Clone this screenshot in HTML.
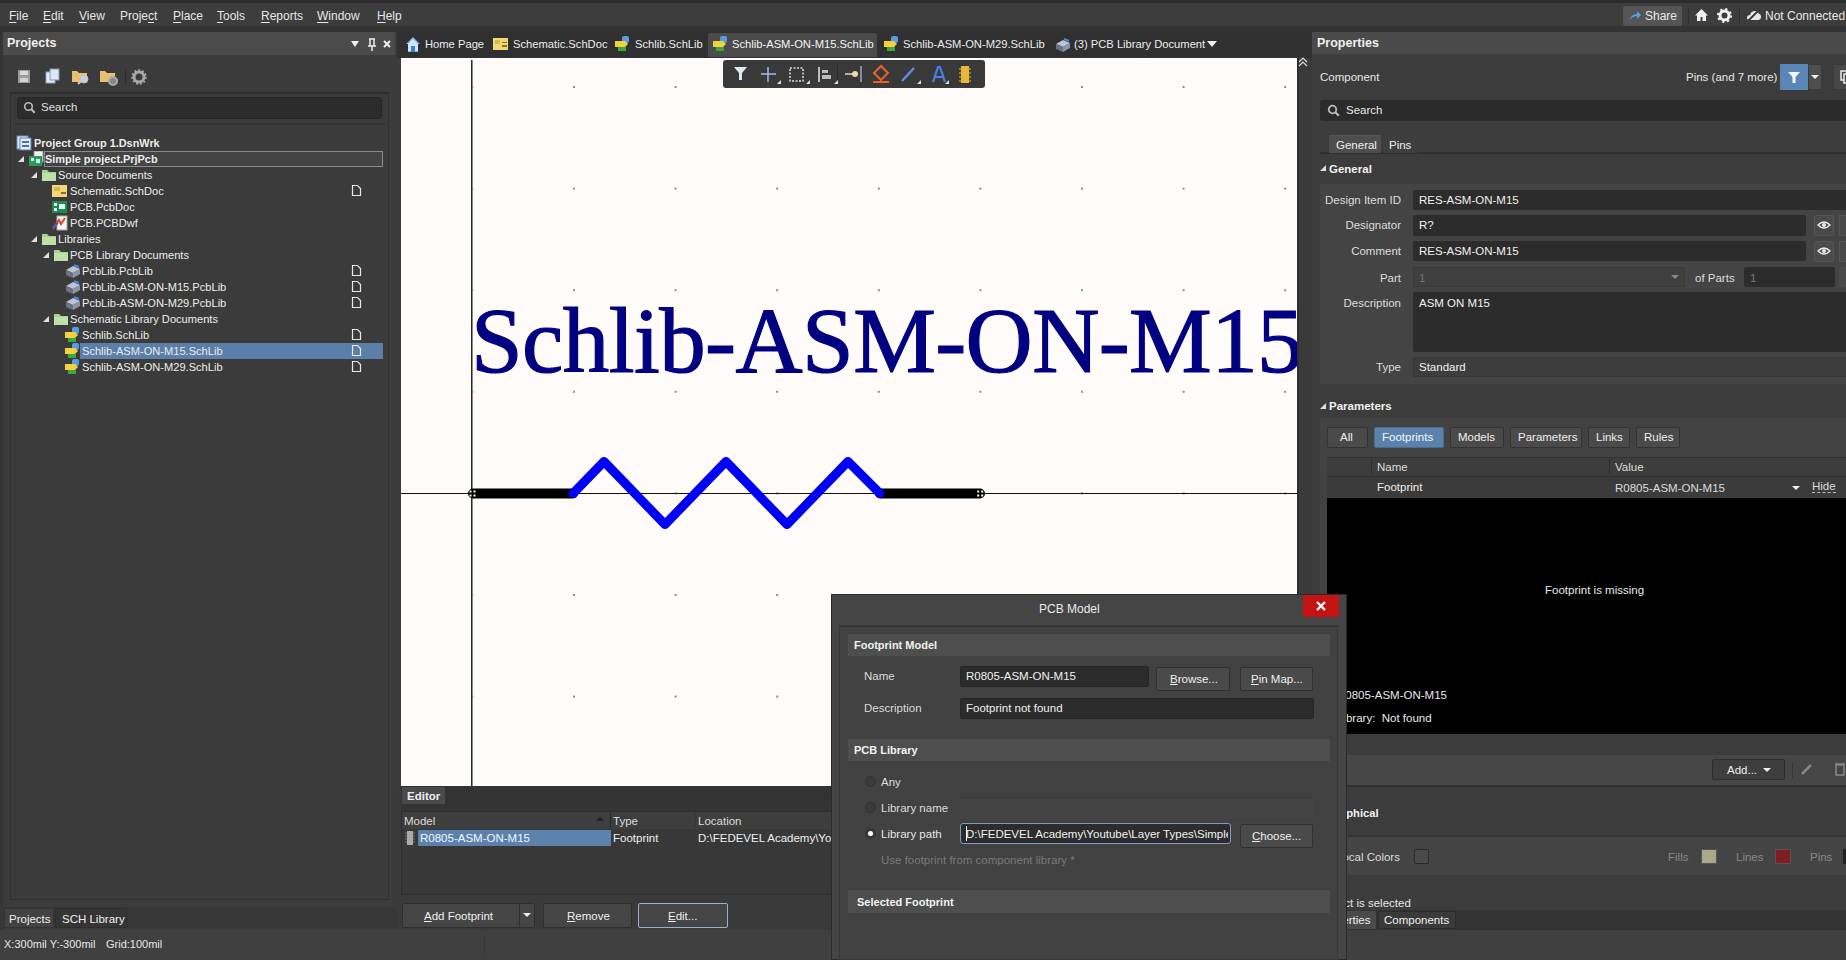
<!DOCTYPE html>
<html><head><meta charset="utf-8">
<style>
*{box-sizing:border-box}
html,body{margin:0;padding:0}
body{width:1846px;height:960px;overflow:hidden;position:relative;background:#3c3c3c;font-family:"Liberation Sans",sans-serif;font-size:12px;color:#e6e6e6}
.a{position:absolute}
.t{position:absolute;white-space:nowrap;line-height:14px}
.b{font-weight:bold}
u{text-decoration:underline;text-underline-offset:2px}
</style></head><body>

<!-- MENU BAR -->
<div class="a" style="left:0;top:0;width:1846px;height:3px;background:#2c2c2c"></div>
<div class="a" style="left:0;top:3px;width:1846px;height:23px;background:#3d3d3d"></div>
<div class="a" style="left:0;top:26px;width:1846px;height:6px;background:#333"></div>
<div id="menu">
<span class="t" style="left:9px;top:9px"><u>F</u>ile</span>
<span class="t" style="left:43px;top:9px"><u>E</u>dit</span>
<span class="t" style="left:79px;top:9px"><u>V</u>iew</span>
<span class="t" style="left:120px;top:9px">Proje<u>c</u>t</span>
<span class="t" style="left:173px;top:9px"><u>P</u>lace</span>
<span class="t" style="left:217px;top:9px"><u>T</u>ools</span>
<span class="t" style="left:261px;top:9px"><u>R</u>eports</span>
<span class="t" style="left:317px;top:9px"><u>W</u>indow</span>
<span class="t" style="left:377px;top:9px"><u>H</u>elp</span>
</div>
<div class="a" style="left:1623px;top:6px;width:59px;height:20px;background:#555;border-radius:2px"></div>
<svg class="a" style="left:1628px;top:9px" width="14" height="14"><path d="M2 11q1-6 7-6V2l4 4-4 4V7q-4 0-7 4z" fill="#5a9ae0"/></svg>
<span class="t" style="left:1645px;top:9px;font-size:12px;color:#e8e8e8">Share</span>
<div class="a" style="left:1688px;top:8px;width:1px;height:16px;background:#2e2e2e"></div>
<svg class="a" style="left:1694px;top:8px" width="15" height="14"><path d="M7.5 1L1 7.5h2V13h3.5V9h2v4H12V7.5h2z" fill="#f0f0f0"/></svg>
<svg class="a" style="left:1717px;top:8px" width="15" height="15"><circle cx="7.5" cy="7.5" r="4.5" fill="none" stroke="#f0f0f0" stroke-width="3"/><circle cx="7.5" cy="7.5" r="6.5" fill="none" stroke="#f0f0f0" stroke-width="2" stroke-dasharray="2.2 2.9"/></svg>
<div class="a" style="left:1739px;top:8px;width:1px;height:16px;background:#2e2e2e"></div>
<svg class="a" style="left:1746px;top:9px" width="15" height="13"><path d="M1 9q0-3 3-3q1-4 5-4q3 0 4 3q2 0 2 3t-3 3H3q-2 0-2-2z" fill="#e8e8e8"/><path d="M2 12L13 1" stroke="#3d3d3d" stroke-width="2"/></svg>
<span class="t" style="left:1765px;top:9px;font-size:12px;color:#e8e8e8">Not Connected</span>

<!-- LEFT PANEL -->
<div class="a" style="left:0;top:32px;width:397px;height:898px;background:#3b3b3b"></div>
<div class="a" style="left:0;top:32px;width:3px;height:898px;background:#353535"></div>
<div class="a" style="left:3px;top:32px;width:392px;height:23px;background:#4b4b4b"></div>
<span class="t b" style="left:7px;top:36px;font-size:12.5px;color:#f0f0f0">Projects</span>
<svg class="a" style="left:350px;top:38px" width="45" height="14"><path d="M1 3h8L5 9z" fill="#eee"/><path d="M19 1h6M20 1v7h4V1M18 8h8M22 8v5" stroke="#eee" stroke-width="1.5" fill="none"/><path d="M34 3l6 6M40 3l-6 6" stroke="#eee" stroke-width="2"/></svg>
<svg class="a" style="left:16px;top:68px" width="140" height="18"><rect x="2" y="2" width="12" height="13" fill="#9a9a9a"/><rect x="4" y="3" width="8" height="4" fill="#d8d8d8"/><rect x="4" y="10" width="8" height="4" fill="#d0d0d0"/><rect x="30" y="4" width="9" height="11" fill="#e8eef6" stroke="#8aa0c0"/><rect x="34" y="1" width="9" height="11" fill="#dfe6f0" stroke="#7a9ac8"/><path d="M56 3h5l2 2h8v9H56z" fill="#e8c070"/><circle cx="68" cy="11" r="4" fill="#ccd" stroke="#bbb"/><path d="M62 16l3-3" stroke="#ccc" stroke-width="2"/><path d="M84 3h5l2 2h8v9H84z" fill="#e8c070"/><circle cx="97" cy="13" r="4" fill="#888" stroke="#aaa" stroke-width="2"/><rect x="109" y="2" width="1" height="15" fill="#2c2c2c"/><circle cx="123" cy="9" r="5" fill="none" stroke="#a8a8a8" stroke-width="3"/><circle cx="123" cy="9" r="7" fill="none" stroke="#a8a8a8" stroke-width="1.5" stroke-dasharray="2 2"/></svg>
<div class="a" style="left:10px;top:92px;width:379px;height:808px;border:1px solid #2f2f2f;border-top:2px solid #2d2d2d"></div>
<div class="a" style="left:17px;top:97px;width:365px;height:22px;background:#2c2c2c;border-radius:3px;border:1px solid #262626"></div>
<svg class="a" style="left:23px;top:101px" width="14" height="14"><circle cx="5.5" cy="5.5" r="3.8" fill="none" stroke="#bbb" stroke-width="1.6"/><path d="M8.3 8.3l3.5 3.5" stroke="#bbb" stroke-width="2"/></svg>
<span class="t" style="left:41px;top:100px;font-size:11.5px;color:#e0e0e0">Search</span>
<div class="a" style="left:15px;top:123px;width:370px;height:2px;background:#303030"></div>
<div class="a" style="left:44px;top:151px;width:339px;height:16px;border:1px solid #8a8a8a;background:#444"></div>
<div class="a" style="left:80px;top:343px;width:303px;height:16px;background:#5b7fa8"></div>
<svg class="a" style="left:16px;top:135px" width="16" height="16"><rect x="1" y="1" width="11" height="13" fill="#dfe8f5" stroke="#6d8fc4"/><rect x="4" y="3" width="11" height="12" fill="#e8eef8" stroke="#5a7fbf"/><rect x="6" y="6" width="7" height="2" fill="#4a6fb0"/><rect x="6" y="10" width="7" height="2" fill="#4a6fb0"/></svg>
<span class="t b" style="left:34px;top:136px;font-size:10.9px;color:#ececec">Project Group 1.DsnWrk</span>
<svg class="a" style="left:18px;top:156px" width="7" height="7"><path d="M6 0V6H0z" fill="#e0e0e0"/></svg>
<svg class="a" style="left:28px;top:151px" width="16" height="16"><rect x="6" y="0" width="9" height="11" fill="#f2f2f2" stroke="#999"/><rect x="1" y="5" width="13" height="10" fill="#2e9a5a"/><rect x="3" y="7" width="3" height="3" fill="#cfe"/><rect x="8" y="8" width="4" height="4" fill="#cfe"/></svg>
<span class="t b" style="left:45px;top:152px;font-size:10.9px;color:#ececec">Simple project.PrjPcb</span>
<svg class="a" style="left:31px;top:172px" width="7" height="7"><path d="M6 0V6H0z" fill="#e0e0e0"/></svg>
<svg class="a" style="left:41px;top:167px" width="16" height="16"><path d="M1 3h5l2 2h7v9H1z" fill="#a9d18e"/><rect x="1" y="6" width="14" height="8" fill="#bfe0a6"/></svg>
<span class="t" style="left:58px;top:168px;font-size:11.1px;color:#ececec">Source Documents</span>
<svg class="a" style="left:52px;top:183px" width="16" height="16"><rect x="0" y="2" width="15" height="12" fill="#f0d878"/><rect x="2" y="4" width="6" height="4" fill="#d8b848"/><rect x="9" y="9" width="5" height="2" fill="#907020"/></svg>
<span class="t" style="left:70px;top:184px;font-size:11.1px;color:#ececec">Schematic.SchDoc</span>
<svg class="a" style="left:351px;top:184px" width="11" height="13"><path d="M1.5 1.5h5l3 3v7h-8z" fill="none" stroke="#e8e8e8" stroke-width="1.2"/></svg>
<svg class="a" style="left:52px;top:199px" width="16" height="16"><rect x="0" y="2" width="15" height="12" fill="#1f8a4c"/><rect x="2" y="4" width="3" height="3" fill="#dff"/><rect x="7" y="5" width="6" height="5" fill="#dff"/><rect x="2" y="9" width="3" height="3" fill="#dff"/></svg>
<span class="t" style="left:70px;top:200px;font-size:11.1px;color:#ececec">PCB.PcbDoc</span>
<svg class="a" style="left:52px;top:215px" width="16" height="16"><rect x="5" y="1" width="10" height="14" fill="#f4f4f4" stroke="#aaa"/><path d="M1 14L7 5l2 4 4-6" stroke="#d42" stroke-width="2" fill="none"/><path d="M1 12l5-4" stroke="#36c" stroke-width="2"/></svg>
<span class="t" style="left:70px;top:216px;font-size:11.1px;color:#ececec">PCB.PCBDwf</span>
<svg class="a" style="left:31px;top:236px" width="7" height="7"><path d="M6 0V6H0z" fill="#e0e0e0"/></svg>
<svg class="a" style="left:41px;top:231px" width="16" height="16"><path d="M1 3h5l2 2h7v9H1z" fill="#a9d18e"/><rect x="1" y="6" width="14" height="8" fill="#bfe0a6"/></svg>
<span class="t" style="left:58px;top:232px;font-size:11.1px;color:#ececec">Libraries</span>
<svg class="a" style="left:43px;top:252px" width="7" height="7"><path d="M6 0V6H0z" fill="#e0e0e0"/></svg>
<svg class="a" style="left:53px;top:247px" width="16" height="16"><path d="M1 3h5l2 2h7v9H1z" fill="#a9d18e"/><rect x="1" y="6" width="14" height="8" fill="#bfe0a6"/></svg>
<span class="t" style="left:70px;top:248px;font-size:11.1px;color:#ececec">PCB Library Documents</span>
<svg class="a" style="left:65px;top:263px" width="16" height="16"><path d="M1 7l7-4 7 3-7 4z" fill="#b8c4d4"/><path d="M1 7v5l7 3v-5z" fill="#6a7484"/><path d="M8 10v5l7-4V6z" fill="#8a96a8"/><path d="M9 2l5 2" stroke="#4a8ad8" stroke-width="2"/></svg>
<span class="t" style="left:82px;top:264px;font-size:11.1px;color:#ececec">PcbLib.PcbLib</span>
<svg class="a" style="left:351px;top:264px" width="11" height="13"><path d="M1.5 1.5h5l3 3v7h-8z" fill="none" stroke="#e8e8e8" stroke-width="1.2"/></svg>
<svg class="a" style="left:65px;top:279px" width="16" height="16"><path d="M1 7l7-4 7 3-7 4z" fill="#b8c4d4"/><path d="M1 7v5l7 3v-5z" fill="#6a7484"/><path d="M8 10v5l7-4V6z" fill="#8a96a8"/><path d="M9 2l5 2" stroke="#4a8ad8" stroke-width="2"/></svg>
<span class="t" style="left:82px;top:280px;font-size:11.1px;color:#ececec">PcbLib-ASM-ON-M15.PcbLib</span>
<svg class="a" style="left:351px;top:280px" width="11" height="13"><path d="M1.5 1.5h5l3 3v7h-8z" fill="none" stroke="#e8e8e8" stroke-width="1.2"/></svg>
<svg class="a" style="left:65px;top:295px" width="16" height="16"><path d="M1 7l7-4 7 3-7 4z" fill="#b8c4d4"/><path d="M1 7v5l7 3v-5z" fill="#6a7484"/><path d="M8 10v5l7-4V6z" fill="#8a96a8"/><path d="M9 2l5 2" stroke="#4a8ad8" stroke-width="2"/></svg>
<span class="t" style="left:82px;top:296px;font-size:11.1px;color:#ececec">PcbLib-ASM-ON-M29.PcbLib</span>
<svg class="a" style="left:351px;top:296px" width="11" height="13"><path d="M1.5 1.5h5l3 3v7h-8z" fill="none" stroke="#e8e8e8" stroke-width="1.2"/></svg>
<svg class="a" style="left:43px;top:316px" width="7" height="7"><path d="M6 0V6H0z" fill="#e0e0e0"/></svg>
<svg class="a" style="left:53px;top:311px" width="16" height="16"><path d="M1 3h5l2 2h7v9H1z" fill="#a9d18e"/><rect x="1" y="6" width="14" height="8" fill="#bfe0a6"/></svg>
<span class="t" style="left:70px;top:312px;font-size:11.1px;color:#ececec">Schematic Library Documents</span>
<svg class="a" style="left:65px;top:327px" width="16" height="16"><rect x="7" y="0" width="7" height="7" rx="2" fill="#5a9ae0"/><path d="M0 5h10l3 3-3 3H0z" fill="#f2d23a"/><rect x="3" y="11" width="8" height="4" fill="#3aa83a"/></svg>
<span class="t" style="left:82px;top:328px;font-size:11.1px;color:#ececec">Schlib.SchLib</span>
<svg class="a" style="left:351px;top:328px" width="11" height="13"><path d="M1.5 1.5h5l3 3v7h-8z" fill="none" stroke="#e8e8e8" stroke-width="1.2"/></svg>
<svg class="a" style="left:65px;top:343px" width="16" height="16"><rect x="7" y="0" width="7" height="7" rx="2" fill="#5a9ae0"/><path d="M0 5h10l3 3-3 3H0z" fill="#f2d23a"/><rect x="3" y="11" width="8" height="4" fill="#3aa83a"/></svg>
<span class="t" style="left:82px;top:344px;font-size:11.1px;color:#ececec">Schlib-ASM-ON-M15.SchLib</span>
<svg class="a" style="left:351px;top:344px" width="11" height="13"><path d="M1.5 1.5h5l3 3v7h-8z" fill="none" stroke="#e8e8e8" stroke-width="1.2"/></svg>
<svg class="a" style="left:65px;top:359px" width="16" height="16"><rect x="7" y="0" width="7" height="7" rx="2" fill="#5a9ae0"/><path d="M0 5h10l3 3-3 3H0z" fill="#f2d23a"/><rect x="3" y="11" width="8" height="4" fill="#3aa83a"/></svg>
<span class="t" style="left:82px;top:360px;font-size:11.1px;color:#ececec">Schlib-ASM-ON-M29.SchLib</span>
<svg class="a" style="left:351px;top:360px" width="11" height="13"><path d="M1.5 1.5h5l3 3v7h-8z" fill="none" stroke="#e8e8e8" stroke-width="1.2"/></svg>

<!-- bottom tabs -->
<div class="a" style="left:0;top:907px;width:397px;height:21px;background:#373737"></div>
<div class="a" style="left:4px;top:908px;width:50px;height:20px;background:#424242;border:1px solid #333"></div>
<span class="t" style="left:9px;top:912px;font-size:11.5px;color:#eee">Projects</span>
<div class="a" style="left:55px;top:908px;width:72px;height:20px;background:#353535;border:1px solid #2e2e2e"></div>
<span class="t" style="left:62px;top:912px;font-size:11.5px;color:#eee">SCH Library</span>
<!-- STATUS BAR -->
<div class="a" style="left:0;top:930px;width:1846px;height:30px;background:#404040"></div>
<span class="t" style="left:4px;top:937px;font-size:11px">X:300mil Y:-300mil</span>
<span class="t" style="left:106px;top:937px;font-size:11px">Grid:100mil</span>

<!-- TAB BAR -->
<div class="a" style="left:397px;top:32px;width:915px;height:26px;background:#303030"></div>
<div class="a" style="left:708px;top:33px;width:169px;height:24px;background:#4b4b4b;border-radius:2px 2px 0 0"></div>
<svg class="a" style="left:405px;top:36px" width="16" height="17"><path d="M8 1L1 8h2v8h4v-5h2v5h4V8h2z" fill="#7fb7ee"/><path d="M8 3L3 8v7h3v-5h4v5h3V8z" fill="#cfe6fb"/><rect x="6" y="10" width="4" height="6" fill="#3d7fc8"/></svg>
<span class="t" style="left:425px;top:37px;font-size:11.2px;color:#ececec">Home Page</span>
<svg class="a" style="left:493px;top:37px" width="16" height="14"><rect x="0" y="1" width="15" height="12" fill="#f0d878"/><rect x="2" y="3" width="5" height="4" fill="#d8b848"/><rect x="9" y="8" width="5" height="2" fill="#907020"/><rect x="9" y="5" width="5" height="1" fill="#907020"/></svg>
<span class="t" style="left:513px;top:37px;font-size:11.2px;color:#ececec">Schematic.SchDoc</span>
<svg class="a" style="left:615px;top:36px" width="16" height="16"><rect x="7" y="0" width="7" height="7" rx="2" fill="#5a9ae0"/><path d="M0 5h10l3 3-3 3H0z" fill="#f2d23a"/><rect x="3" y="11" width="8" height="4" fill="#3aa83a"/></svg>
<span class="t" style="left:635px;top:37px;font-size:11.2px;color:#ececec">Schlib.SchLib</span>
<svg class="a" style="left:713px;top:36px" width="16" height="16"><rect x="7" y="0" width="7" height="7" rx="2" fill="#5a9ae0"/><path d="M0 5h10l3 3-3 3H0z" fill="#f2d23a"/><rect x="3" y="11" width="8" height="4" fill="#3aa83a"/></svg>
<span class="t" style="left:732px;top:37px;font-size:11.2px;color:#f4f4f4">Schlib-ASM-ON-M15.SchLib</span>
<svg class="a" style="left:884px;top:36px" width="16" height="16"><rect x="7" y="0" width="7" height="7" rx="2" fill="#5a9ae0"/><path d="M0 5h10l3 3-3 3H0z" fill="#f2d23a"/><rect x="3" y="11" width="8" height="4" fill="#3aa83a"/></svg>
<span class="t" style="left:903px;top:37px;font-size:11.2px;color:#ececec">Schlib-ASM-ON-M29.SchLib</span>
<svg class="a" style="left:1055px;top:37px" width="16" height="16"><path d="M1 7l7-4 7 3-7 4z" fill="#b8c4d4"/><path d="M1 7v5l7 3v-5z" fill="#6a7484"/><path d="M8 10v5l7-4V6z" fill="#8a96a8"/><path d="M9 2l5 2" stroke="#4a8ad8" stroke-width="2"/></svg>
<span class="t" style="left:1074px;top:37px;font-size:11.2px;color:#ececec">(3) PCB Library Document</span>
<svg class="a" style="left:1206px;top:40px" width="12" height="8"><path d="M1 1h10L6 7z" fill="#eee"/></svg>
<!-- CANVAS -->
<div class="a" style="left:401px;top:58px;width:896px;height:728px;background:#fefbf8;overflow:hidden">
<svg width="896" height="728" style="position:absolute;left:0;top:0">
<defs><pattern id="gd" x="172" y="28" width="101.6" height="101.6" patternUnits="userSpaceOnUse"><rect x="-1" y="0" width="3" height="2" fill="#8c8c8c"/></pattern></defs>
<rect x="0" y="0" width="896" height="728" fill="url(#gd)"/>
<rect x="70" y="0" width="1" height="728" fill="#2a2a2a"/><rect x="71" y="0" width="1" height="728" fill="#8a8a8a"/>
<rect x="0" y="435" width="896" height="1" fill="#111"/><rect x="0" y="0" width="896" height="2" fill="#ffffff"/>
<text x="70" y="314" style="font-family:'Liberation Serif';font-size:93px;letter-spacing:-0.6px" fill="#000080" stroke="#000080" stroke-width="1.2">Schlib-ASM-ON-M15</text>
<line x1="72" y1="435.5" x2="172" y2="435.5" stroke="#000" stroke-width="10" stroke-linecap="round"/>
<line x1="479" y1="435.5" x2="579" y2="435.5" stroke="#000" stroke-width="10" stroke-linecap="round"/>
<polyline points="172,435.5 203,403.5 264,466.5 325,403.5 386,466.5 447,403.5 479,435.5" fill="none" stroke="#0000f5" stroke-width="9" stroke-linejoin="round" stroke-linecap="round"/>
<path d="M68.5 432.5h2v2h-2zM72.5 432.5h2v2h-2zM68.5 436.5h2v2h-2zM72.5 436.5h2v2h-2z M576.2 432.5h2v2h-2zM580.2 432.5h2v2h-2zM576.2 436.5h2v2h-2zM580.2 436.5h2v2h-2z" fill="#fff"/>
</svg>
</div>
<!-- canvas toolbar -->
<div class="a" style="left:723px;top:60px;width:262px;height:28px;background:#393939;border-radius:3px"></div>
<svg class="a" style="left:723px;top:60px" width="262" height="28">
<path d="M11 7h13l-5 6v7h-3v-7z" fill="#dce8f4"/>
<path d="M45 7v15M38 14h15" stroke="#a8b8e8" stroke-width="1.5"/>
<rect x="67" y="8" width="13" height="13" fill="none" stroke="#ddd" stroke-width="1.5" stroke-dasharray="2 1.5"/>
<path d="M96 7v15" stroke="#bbb" stroke-width="2"/><rect x="99" y="10" width="6" height="3" fill="#bbb"/><rect x="99" y="15" width="9" height="4" fill="#bbb"/>
<rect x="114" y="5" width="1" height="19" fill="#2a2a2a"/>
<path d="M122 14h8" stroke="#ddd" stroke-width="1.5"/><circle cx="132" cy="14" r="3" fill="#f0d8a8"/><path d="M138 6v16" stroke="#9aa8d8" stroke-width="1.5"/>
<path d="M158 6l7 7-7 7-7-7z" fill="none" stroke="#e8602a" stroke-width="2"/><rect x="150" y="21" width="16" height="2" fill="#e8602a"/>
<path d="M179 21l12-13" stroke="#5a8ee8" stroke-width="2.5"/>
<path d="M210 22l5-15h2l5 15M212 17h8" fill="none" stroke="#4a7ee8" stroke-width="2.2"/>
<rect x="238" y="6" width="8" height="17" fill="#e8b838"/><path d="M236 9h2M236 13h2M236 17h2M236 21h2M246 9h2M246 13h2M246 17h2M246 21h2" stroke="#e8b838"/>
<path d="M54 24h4v-4z M83 24h4v-4z M111 24h4v-4z M194 24h4v-4z M222 24h4v-4z" fill="#ddd"/>
</svg>

<!-- EDITOR PANEL -->
<div class="a" style="left:397px;top:786px;width:915px;height:144px;background:#3a3a3a"></div>
<div class="a" style="left:401px;top:786px;width:911px;height:18px;background:#333"></div>
<div class="a" style="left:402px;top:787px;width:43px;height:17px;background:#4a4a4a"></div>
<span class="t b" style="left:407px;top:789px;font-size:11.5px;color:#f0f0f0">Editor</span>
<div class="a" style="left:401px;top:804px;width:911px;height:7px;background:#343434"></div>
<div class="a" style="left:401px;top:811px;width:911px;height:84px;background:#383838;border:1px solid #2e2e2e"></div>
<div class="a" style="left:402px;top:812px;width:909px;height:17px;background:#3e3e3e"></div>
<span class="t" style="left:404px;top:814px;font-size:11.5px;color:#dcdcdc">Model</span>
<svg class="a" style="left:596px;top:817px" width="8" height="5"><path d="M0 4h8L4 0z" fill="#222"/></svg>
<div class="a" style="left:610px;top:813px;width:1px;height:15px;background:#2a2a2a"></div>
<span class="t" style="left:613px;top:814px;font-size:11.5px;color:#dcdcdc">Type</span>
<div class="a" style="left:695px;top:813px;width:1px;height:15px;background:#2a3a4a"></div>
<span class="t" style="left:698px;top:814px;font-size:11.5px;color:#dcdcdc">Location</span>
<svg class="a" style="left:404px;top:830px" width="12" height="16"><rect x="3" y="1" width="6" height="14" fill="#aaa"/><path d="M1 3h2M1 6h2M1 9h2M1 12h2M9 3h2M9 6h2M9 9h2M9 12h2" stroke="#777"/></svg>
<div class="a" style="left:418px;top:830px;width:193px;height:16px;background:#5b82ad"></div>
<span class="t" style="left:420px;top:831px;font-size:11.5px;color:#f4f8fc">R0805-ASM-ON-M15</span>
<span class="t" style="left:613px;top:831px;font-size:11.5px;color:#eee">Footprint</span>
<span class="t" style="left:698px;top:831px;font-size:11.5px;color:#eee">D:\FEDEVEL Academy\Youtube</span>
<div class="a" style="left:402px;top:903px;width:133px;height:25px;background:#454545;border:1px solid #2e2e2e;border-radius:2px"></div>
<div class="a" style="left:519px;top:904px;width:1px;height:23px;background:#2e2e2e"></div>
<span class="t" style="left:424px;top:909px;font-size:11.5px;color:#eee"><span style="text-decoration:underline">A</span>dd Footprint</span>
<svg class="a" style="left:522px;top:912px" width="10" height="6"><path d="M1 1h8L5 5z" fill="#eee"/></svg>
<div class="a" style="left:543px;top:903px;width:89px;height:25px;background:#454545;border:1px solid #2e2e2e;border-radius:2px"></div>
<span class="t" style="left:567px;top:909px;font-size:11.5px;color:#eee"><span style="text-decoration:underline">R</span>emove</span>
<div class="a" style="left:638px;top:903px;width:90px;height:25px;background:#454545;border:1px solid #9ab0c8;border-radius:2px"></div>
<span class="t" style="left:668px;top:909px;font-size:11.5px;color:#eee"><span style="text-decoration:underline">E</span>dit...</span>
<div class="a" style="left:484px;top:935px;width:1px;height:20px;background:#383838"></div>
<!-- PROPERTIES -->
<div class="a" style="left:1297px;top:58px;width:15px;height:728px;background:#3a3a3a;border-left:2px solid #2e2e2e"></div>
<svg class="a" style="left:1298px;top:57px" width="10" height="10"><path d="M1 5l4-4 4 4M1 9l4-4 4 4" fill="none" stroke="#ddd" stroke-width="1.2"/></svg>
<div class="a" style="left:1312px;top:32px;width:534px;height:898px;background:#3c3c3c"></div>
<div class="a" style="left:1312px;top:32px;width:534px;height:21px;background:#4a4a4a"></div>
<div class="a" style="left:1312px;top:53px;width:534px;height:2px;background:#444"></div>
<span class="t b" style="left:1317px;top:36px;font-size:12.5px;color:#f0f0f0">Properties</span>
<span class="t" style="left:1320px;top:70px;font-size:11.5px;color:#e6e6e6">Component</span>
<span class="t" style="left:1686px;top:70px;font-size:11.5px;color:#e6e6e6">Pins (and 7 more)</span>
<div class="a" style="left:1780px;top:64px;width:28px;height:26px;background:#5a85b5"></div>
<svg class="a" style="left:1786px;top:70px" width="16" height="15"><path d="M2 2h12l-4.5 5v6h-3V7z" fill="#f4f8fc"/></svg>
<div class="a" style="left:1808px;top:64px;width:14px;height:26px;background:#4e4e4e;border:1px solid #3a3a3a"></div>
<svg class="a" style="left:1810px;top:74px" width="10" height="6"><path d="M1 1h8L5 5z" fill="#eee"/></svg>
<div class="a" style="left:1833px;top:64px;width:20px;height:26px;background:#474747;border:1px solid #3a3a3a"></div>
<svg class="a" style="left:1840px;top:70px" width="8" height="14"><rect x="1" y="1" width="8" height="9" fill="none" stroke="#eee" stroke-width="1.5"/><rect x="4" y="4" width="8" height="9" fill="#474747" stroke="#eee" stroke-width="1.5"/></svg>
<div class="a" style="left:1320px;top:100px;width:540px;height:21px;background:#2b2b2b;border-radius:3px"></div>
<svg class="a" style="left:1327px;top:104px" width="14" height="14"><circle cx="5.5" cy="5.5" r="3.8" fill="none" stroke="#bbb" stroke-width="1.8"/><path d="M8.3 8.3l3.5 3.5" stroke="#bbb" stroke-width="2.2"/></svg>
<span class="t" style="left:1346px;top:103px;font-size:11.5px;color:#e6e6e6">Search</span>
<div class="a" style="left:1320px;top:152px;width:526px;height:2px;background:#2f2f2f"></div>
<div class="a" style="left:1329px;top:135px;width:52px;height:18px;background:#4e4e4e;border-top:1px solid #555"></div>
<span class="t" style="left:1336px;top:138px;font-size:11.5px;color:#eee">General</span>
<div class="a" style="left:1383px;top:135px;width:34px;height:18px;background:#3e3e3e"></div>
<span class="t" style="left:1389px;top:138px;font-size:11.5px;color:#eee">Pins</span>
<svg class="a" style="left:1320px;top:165px" width="7" height="7"><path d="M6 0V6H0z" fill="#ddd"/></svg>
<span class="t b" style="left:1329px;top:162px;font-size:11.5px;color:#f0f0f0">General</span>
<div class="a" style="left:1320px;top:184px;width:526px;height:200px;background:#444"></div>
<div class="a" style="left:1413px;top:190px;width:440px;height:20px;background:#2c2c2c;border-radius:2px"></div>
<div class="a" style="left:1413px;top:215px;width:393px;height:21px;background:#2c2c2c;border-radius:2px"></div>
<div class="a" style="left:1413px;top:241px;width:393px;height:20px;background:#2c2c2c;border-radius:2px"></div>
<span class="t" style="right:445px;top:193px;font-size:11.5px;color:#dcdcdc">Design Item ID</span>
<span class="t" style="left:1419px;top:193px;font-size:11.5px;color:#f0f0f0">RES-ASM-ON-M15</span>
<span class="t" style="right:445px;top:218px;font-size:11.5px;color:#dcdcdc">Designator</span>
<span class="t" style="left:1419px;top:218px;font-size:11.5px;color:#f0f0f0">R?</span>
<span class="t" style="right:445px;top:244px;font-size:11.5px;color:#dcdcdc">Comment</span>
<span class="t" style="left:1419px;top:244px;font-size:11.5px;color:#f0f0f0">RES-ASM-ON-M15</span>
<div class="a" style="left:1814px;top:215px;width:20px;height:21px;background:#4a4a4a;border:1px solid #555;border-radius:2px"></div>
<svg class="a" style="left:1817px;top:219px" width="14" height="12"><path d="M1 6q6-6 12 0q-6 6-12 0z" fill="none" stroke="#eee" stroke-width="1.4"/><circle cx="7" cy="6" r="2" fill="#eee"/></svg>
<div class="a" style="left:1839px;top:215px;width:10px;height:21px;background:#4a4a4a;border:1px solid #555"></div>
<div class="a" style="left:1814px;top:241px;width:20px;height:21px;background:#4a4a4a;border:1px solid #555;border-radius:2px"></div>
<svg class="a" style="left:1817px;top:245px" width="14" height="12"><path d="M1 6q6-6 12 0q-6 6-12 0z" fill="none" stroke="#eee" stroke-width="1.4"/><circle cx="7" cy="6" r="2" fill="#eee"/></svg>
<div class="a" style="left:1839px;top:241px;width:10px;height:21px;background:#4a4a4a;border:1px solid #555"></div>
<span class="t" style="right:445px;top:271px;font-size:11.5px;color:#dcdcdc">Part</span>
<div class="a" style="left:1413px;top:267px;width:272px;height:20px;background:#3f3f3f;border:1px solid #393939"></div>
<span class="t" style="left:1419px;top:271px;font-size:11.5px;color:#777">1</span>
<svg class="a" style="left:1670px;top:274px" width="10" height="6"><path d="M1 1h8L5 5z" fill="#888"/></svg>
<span class="t" style="left:1695px;top:271px;font-size:11.5px;color:#dcdcdc">of Parts</span>
<div class="a" style="left:1744px;top:267px;width:91px;height:20px;background:#2c2c2c;border-radius:2px"></div>
<span class="t" style="left:1750px;top:271px;font-size:11.5px;color:#777">1</span>
<div class="a" style="left:1839px;top:267px;width:10px;height:20px;background:#4a4a4a"></div>
<span class="t" style="right:445px;top:296px;font-size:11.5px;color:#dcdcdc">Description</span>
<div class="a" style="left:1413px;top:292px;width:440px;height:60px;background:#2c2c2c;border-radius:2px"></div>
<span class="t" style="left:1419px;top:296px;font-size:11.5px;color:#f0f0f0">ASM ON M15</span>
<span class="t" style="right:445px;top:360px;font-size:11.5px;color:#dcdcdc">Type</span>
<div class="a" style="left:1413px;top:357px;width:440px;height:20px;background:#3d3d3d;border:1px solid #363636;border-radius:2px"></div>
<span class="t" style="left:1419px;top:360px;font-size:11.5px;color:#f0f0f0">Standard</span>

<svg class="a" style="left:1320px;top:403px" width="7" height="7"><path d="M6 0V6H0z" fill="#ddd"/></svg>
<span class="t b" style="left:1329px;top:399px;font-size:11.5px;color:#f0f0f0">Parameters</span>
<div class="a" style="left:1320px;top:418px;width:526px;height:340px;background:#424242"></div>
<div class="a" style="left:1327px;top:427px;width:41px;height:21px;background:#4a4a4a;border:1px solid #333;border-radius:2px"></div>
<span class="t" style="left:1340px;top:430px;font-size:11.5px;color:#eee">All</span>
<div class="a" style="left:1374px;top:427px;width:70px;height:21px;background:#5b82ad;border:1px solid #4a6a90;border-radius:2px"></div>
<span class="t" style="left:1382px;top:430px;font-size:11.5px;color:#f4f8fc">Footprints</span>
<div class="a" style="left:1450px;top:427px;width:54px;height:21px;background:#4a4a4a;border:1px solid #333;border-radius:2px"></div>
<span class="t" style="left:1458px;top:430px;font-size:11.5px;color:#eee">Models</span>
<div class="a" style="left:1510px;top:427px;width:72px;height:21px;background:#4a4a4a;border:1px solid #333;border-radius:2px"></div>
<span class="t" style="left:1518px;top:430px;font-size:11.5px;color:#eee">Parameters</span>
<div class="a" style="left:1588px;top:427px;width:42px;height:21px;background:#4a4a4a;border:1px solid #333;border-radius:2px"></div>
<span class="t" style="left:1596px;top:430px;font-size:11.5px;color:#eee">Links</span>
<div class="a" style="left:1636px;top:427px;width:44px;height:21px;background:#4a4a4a;border:1px solid #333;border-radius:2px"></div>
<span class="t" style="left:1644px;top:430px;font-size:11.5px;color:#eee">Rules</span>
<div class="a" style="left:1327px;top:457px;width:530px;height:19px;background:#3d3d3d;border-top:1px solid #333"></div>
<div class="a" style="left:1371px;top:459px;width:1px;height:15px;background:#2e2e2e"></div>
<div class="a" style="left:1609px;top:459px;width:1px;height:15px;background:#2e2e2e"></div>
<span class="t" style="left:1377px;top:460px;font-size:11.5px;color:#dcdcdc">Name</span>
<span class="t" style="left:1615px;top:460px;font-size:11.5px;color:#dcdcdc">Value</span>
<div class="a" style="left:1327px;top:476px;width:530px;height:22px;background:#3b3b3b;border-top:1px solid #303030"></div>
<span class="t" style="left:1377px;top:480px;font-size:11.5px;color:#eee">Footprint</span>
<span class="t" style="left:1615px;top:481px;font-size:11.5px;color:#dcdcdc">R0805-ASM-ON-M15</span>
<svg class="a" style="left:1791px;top:485px" width="10" height="6"><path d="M1 1h8L5 5z" fill="#eee"/></svg>
<span class="t" style="left:1812px;top:480px;font-size:11.5px;color:#dcdcdc;border-bottom:1px dashed #bbb;line-height:12px">Hide</span>
<div class="a" style="left:1327px;top:498px;width:530px;height:236px;background:#000"></div>
<span class="t" style="left:1545px;top:583px;font-size:11.5px;color:#e8e8e8">Footprint is missing</span>
<span class="t" style="left:1337px;top:688px;font-size:11.5px;color:#e8e8e8">R0805-ASM-ON-M15</span>
<span class="t" style="left:1337px;top:711px;font-size:11.5px;color:#e8e8e8">Library:&nbsp; Not found</span>
<div class="a" style="left:1327px;top:734px;width:530px;height:21px;background:#3c3c3c"></div>
<div class="a" style="left:1327px;top:755px;width:530px;height:31px;background:#464646;border-bottom:1px solid #333"></div>
<div class="a" style="left:1712px;top:759px;width:73px;height:21px;background:#3e3e3e;border:1px solid #2e2e2e;border-radius:2px"></div>
<span class="t" style="left:1727px;top:763px;font-size:11.5px;color:#eee">Add...</span>
<svg class="a" style="left:1762px;top:767px" width="10" height="6"><path d="M1 1h8L5 5z" fill="#eee"/></svg>
<div class="a" style="left:1792px;top:762px;width:1px;height:16px;background:#363636"></div>
<svg class="a" style="left:1800px;top:762px" width="14" height="14"><path d="M2 12l9-9" stroke="#888" stroke-width="2.5"/></svg>
<svg class="a" style="left:1834px;top:761px" width="12" height="16"><rect x="2" y="4" width="8" height="10" fill="none" stroke="#888" stroke-width="1.5"/><path d="M1 3h10" stroke="#888" stroke-width="1.5"/></svg>

<div class="a" style="left:1312px;top:786px;width:534px;height:1px;background:#2e2e2e"></div>
<span class="t b" style="left:1327px;top:806px;font-size:11.2px;color:#f0f0f0">Graphical</span>
<div class="a" style="left:1320px;top:835px;width:526px;height:2px;background:#353535"></div>
<div class="a" style="left:1320px;top:837px;width:526px;height:38px;background:#444"></div>
<span class="t" style="left:1336px;top:850px;font-size:11.5px;color:#dcdcdc">Local Colors</span>
<div class="a" style="left:1414px;top:849px;width:15px;height:15px;background:#4a4a4a;border:1px solid #2a2a2a;border-radius:2px"></div>
<span class="t" style="left:1668px;top:850px;font-size:11.5px;color:#888">Fills</span>
<div class="a" style="left:1701px;top:849px;width:16px;height:15px;background:#a9a88a;border:1px solid #555"></div>
<span class="t" style="left:1736px;top:850px;font-size:11.5px;color:#888">Lines</span>
<div class="a" style="left:1775px;top:849px;width:16px;height:15px;background:#7e1e22;border:1px solid #555"></div>
<span class="t" style="left:1810px;top:850px;font-size:11.5px;color:#888">Pins</span>
<div class="a" style="left:1843px;top:849px;width:4px;height:15px;background:#222"></div>
<span class="t" style="left:1313px;top:896px;font-size:11.5px;color:#e6e6e6">1 object is selected</span>
<div class="a" style="left:1312px;top:910px;width:534px;height:20px;background:#333"></div>
<div class="a" style="left:1314px;top:911px;width:62px;height:18px;background:#4a4a4a"></div>
<span class="t" style="left:1318px;top:913px;font-size:11.5px;color:#eee">Properties</span>
<div class="a" style="left:1378px;top:911px;width:78px;height:18px;background:#3a3a3a;border:1px solid #2c2c2c"></div>
<span class="t" style="left:1384px;top:913px;font-size:11.5px;color:#eee">Components</span>
<!-- DIALOG -->
<div class="a" style="left:831px;top:594px;width:516px;height:366px;background:#454545;border:1px solid #2a2a2a"></div>
<span class="t" style="left:1039px;top:602px;font-size:12px;color:#eaeaea">PCB Model</span>
<div class="a" style="left:1303px;top:595px;width:36px;height:22px;background:#c41313"></div>
<svg class="a" style="left:1315px;top:600px" width="12" height="12"><path d="M2 2l8 8M10 2l-8 8" stroke="#fff" stroke-width="2.4"/></svg>
<div class="a" style="left:839px;top:625px;width:499px;height:335px;background:#414141;border:1px solid #383838;border-top:2px solid #353535"></div>
<div class="a" style="left:848px;top:634px;width:482px;height:22px;background:#4e4e4e"></div>
<span class="t b" style="left:854px;top:638px;font-size:11px;color:#f2f2f2">Footprint Model</span>
<span class="t" style="left:864px;top:669px;font-size:11.5px;color:#dcdcdc">Name</span>
<div class="a" style="left:960px;top:666px;width:189px;height:21px;background:#2c2c2c;border:1px solid #262626;border-radius:2px"></div>
<span class="t" style="left:966px;top:669px;font-size:11.5px;color:#f0f0f0">R0805-ASM-ON-M15</span>
<div class="a" style="left:1156px;top:667px;width:74px;height:24px;background:#4a4a4a;border:1px solid #303030;border-radius:2px"></div>
<span class="t" style="left:1170px;top:672px;font-size:11.5px;color:#eee"><span style="text-decoration:underline">B</span>rowse...</span>
<div class="a" style="left:1240px;top:667px;width:73px;height:24px;background:#4a4a4a;border:1px solid #303030;border-radius:2px"></div>
<span class="t" style="left:1251px;top:672px;font-size:11.5px;color:#eee"><span style="text-decoration:underline">P</span>in Map...</span>
<span class="t" style="left:864px;top:701px;font-size:11.5px;color:#dcdcdc">Description</span>
<div class="a" style="left:960px;top:698px;width:354px;height:21px;background:#2c2c2c;border:1px solid #262626;border-radius:2px"></div>
<span class="t" style="left:966px;top:701px;font-size:11.5px;color:#f0f0f0">Footprint not found</span>
<div class="a" style="left:848px;top:739px;width:482px;height:22px;background:#4e4e4e"></div>
<span class="t b" style="left:854px;top:743px;font-size:11px;color:#f2f2f2">PCB Library</span>
<div class="a" style="left:865px;top:776px;width:11px;height:11px;border-radius:50%;background:#3a3a3a;border:1px solid #333"></div>
<span class="t" style="left:881px;top:775px;font-size:11.5px;color:#dcdcdc">Any</span>
<div class="a" style="left:865px;top:802px;width:11px;height:11px;border-radius:50%;background:#3a3a3a;border:1px solid #333"></div>
<span class="t" style="left:881px;top:801px;font-size:11.5px;color:#dcdcdc">Library name</span>
<div class="a" style="left:960px;top:797px;width:354px;height:21px;background:#444;border-top:1px solid #3a3a3a"></div>
<div class="a" style="left:865px;top:828px;width:11px;height:11px;border-radius:50%;background:#3a3a3a;border:1px solid #333"></div>
<div class="a" style="left:868px;top:831px;width:5px;height:5px;border-radius:50%;background:#fff"></div>
<span class="t" style="left:881px;top:827px;font-size:11.5px;color:#e6e6e6">Library path</span>
<div class="a" style="left:960px;top:823px;width:271px;height:21px;background:#2c2c2c;border:1px solid #7d9cc6;border-radius:3px;overflow:hidden"></div>
<span class="t" style="left:966px;top:827px;font-size:11.5px;color:#f0f0f0;width:262px;overflow:hidden">D:\FEDEVEL Academy\Youtube\Layer Types\Simple project</span>
<div class="a" style="left:966px;top:826px;width:1px;height:15px;background:#fff"></div>
<div class="a" style="left:1240px;top:824px;width:73px;height:24px;background:#4a4a4a;border:1px solid #303030;border-radius:2px"></div>
<span class="t" style="left:1252px;top:829px;font-size:11.5px;color:#eee"><span style="text-decoration:underline">C</span>hoose...</span>
<span class="t" style="left:881px;top:853px;font-size:11.5px;color:#7a7a7a">Use footprint from component library *</span>
<div class="a" style="left:848px;top:890px;width:482px;height:23px;background:#4e4e4e"></div>
<span class="t b" style="left:857px;top:895px;font-size:11px;color:#f2f2f2">Selected Footprint</span>
</body></html>
